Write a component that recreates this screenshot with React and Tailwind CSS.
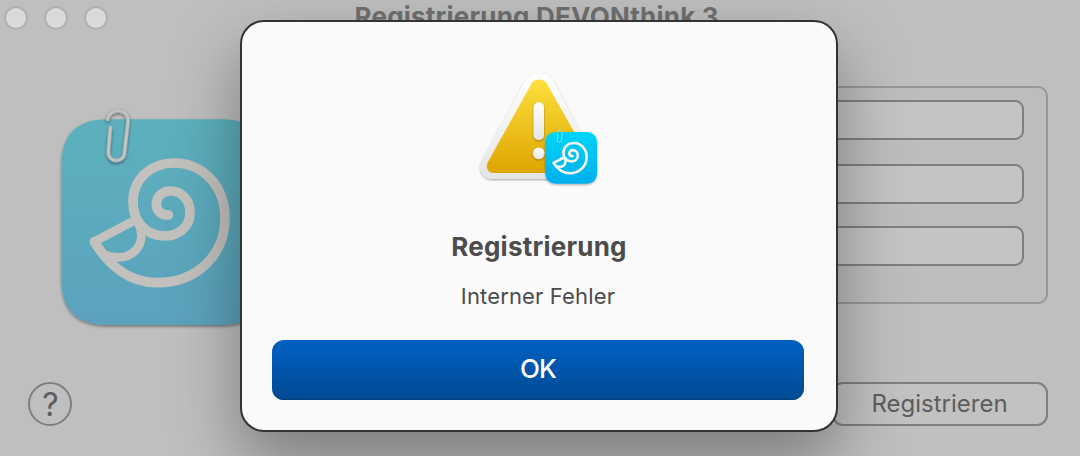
const SHELL =
  "M163 455 C205 525 268 578 352 578 C468 578 555 497 555 385 C555 285 486 219 402 219 C331 219 279 268 279 335 C279 394 318 438 375 438 C418 438 450 408 450 368 C450 329 425 303 390 303 C366 303 349 321 349 343 C349 362 363 375 385 375";
const FLAP = "M284 391 L163 455 M294 396 C301 410 304 422 304 437 C304 474 274 502 237 502 C222 502 208 500 194 494";
const CLIP =
  "M211 113 L205 185 C204 219 251 219 253 190 L264 96 C268 52 207 52 203 88";

function AppIcon() {
  return (
    <svg className="block h-[250px] w-[230px] shrink-0" viewBox="0 0 690 750">
      <defs>
        <linearGradient id="tile" x1="0" y1="0" x2="0" y2="1">
          <stop offset="0" stopColor="#5cb1bd" />
          <stop offset="1" stopColor="#5ca2bd" />
        </linearGradient>
        <filter id="soft" x="-20%" y="-20%" width="140%" height="140%">
          <feDropShadow dx="0" dy="5" stdDeviation="4" floodOpacity="0.4" />
        </filter>
      </defs>
      <path
        d="M204 88 H542 C637 88 682 133 682 228 V565 C682 660 637 705 542 705 H204 C109 705 64 660 64 565 V228 C64 133 109 88 204 88 Z"
        fill="url(#tile)"
        filter="url(#soft)"
      />
      <g fill="none" stroke="#c2c1be" strokeWidth="29" strokeLinecap="round" strokeLinejoin="round">
        <path d={SHELL} />
        <path d={FLAP} strokeWidth="26" />
      </g>
      <g fill="none" strokeLinecap="round">
        <path d={CLIP} stroke="#a4a8a8" strokeWidth="12" filter="url(#soft)" />
        <path d={CLIP} stroke="#c3c3c3" strokeWidth="8" />
      </g>
    </svg>
  );
}

function WarningIcon() {
  return (
    <svg className="block h-[140px] w-[160px]" viewBox="0 0 480 420">
      <defs>
        <linearGradient id="yellow" x1="0" y1="0" x2="0" y2="1">
          <stop offset="0" stopColor="#fce03d" />
          <stop offset="1" stopColor="#dfa400" />
        </linearGradient>
        <linearGradient id="rim" x1="0" y1="0" x2="0" y2="1">
          <stop offset="0" stopColor="#ffffff" />
          <stop offset="1" stopColor="#e5e5e5" />
        </linearGradient>
        <linearGradient id="cyan" x1="0" y1="0" x2="0" y2="1">
          <stop offset="0" stopColor="#00d5f7" />
          <stop offset="1" stopColor="#00aeee" />
        </linearGradient>
        <filter id="drop" x="-20%" y="-20%" width="140%" height="140%">
          <feDropShadow dx="0" dy="3" stdDeviation="3" floodOpacity="0.35" />
        </filter>
      </defs>
      <path
        d="M193 66 C213 32 262 32 282 66 L405 300 C419 328 402 357 371 357 H98 C67 357 52 327 67 300 Z"
        fill="url(#rim)"
        filter="url(#drop)"
      />
      <path
        d="M215 70 C224 55 251 55 260 70 L392 304 C402 323 394 339 374 339 H102 C82 339 75 322 85 304 Z"
        fill="url(#yellow)"
      />
      <g fill="url(#rim)" filter="url(#drop)">
        <rect x="221" y="127" width="31" height="113" rx="15" />
        <circle cx="236" cy="280" r="17.5" />
      </g>
      <path
        d="M291 216 H376 C400 216 411 228 411 251 V336 C411 360 400 371 376 371 H291 C267 371 256 360 256 336 V251 C256 228 267 216 291 216 Z"
        fill="url(#cyan)"
        filter="url(#drop)"
      />
      <g
        transform="translate(240 194) scale(0.252)"
        fill="none"
        stroke="#f8f7ef"
        strokeWidth="31"
        strokeLinecap="round"
        strokeLinejoin="round"
      >
        <path d={SHELL} />
        <path d={FLAP} />
        <path d={CLIP} stroke="#a9d5dc" strokeWidth="11" />
      </g>
    </svg>
  );
}

function Field({ className }) {
  return <div className={`h-10 rounded-[9px] border-2 border-[#7f7f7f] bg-[#c4c4c4] ${className}`} />;
}

function TrafficLight() {
  return <span className="size-6 rounded-full border-2 border-[#b0b0b0] bg-[#dadada]" />;
}

export default function App() {
  return (
    <div className="relative h-[456px] w-[1080px] overflow-hidden bg-[#bfbfbf] font-['Inter','Liberation_Sans',sans-serif]">
      <header className="flex h-9">
        <div className="flex gap-4 pt-[6px] pl-1">
          <TrafficLight />
          <TrafficLight />
          <TrafficLight />
        </div>
        <h1 className="ml-[246.5px] pt-px text-[26px] leading-[31px] font-bold tracking-[0.21px] whitespace-nowrap text-[#707070]">
          Registrierung DEVONthink 3
        </h1>
      </header>
      <main className="flex h-[346px] justify-between pr-8 pl-10">
        <div className="pt-[54px]">
          <AppIcon />
        </div>
        <section className="mt-[50px] h-[218px] w-[460px] rounded-[10px] border-2 border-[#979797] bg-[#bdbdbd] px-[22px] pt-3">
          <Field />
          <Field className="mt-6" />
          <Field className="mt-[22px]" />
        </section>
      </main>
      <footer className="flex justify-between pr-8 pl-7">
        <button className="flex size-11 items-center justify-center rounded-full border-2 border-[#7f7f7f]">
          <span className="pt-0.5 pl-px text-[32px] leading-none font-normal text-[#5d5d5d]">?</span>
        </button>
        <button className="h-11 w-[216px] rounded-[11px] border-2 border-[#7f7f7f] bg-[#c2c2c2] pr-px text-center text-[24px] leading-[40px] text-[#5d5d5d]">
          Registrieren
        </button>
      </footer>

      <div
        role="alertdialog"
        className="absolute top-5 left-60 flex h-[412px] w-[598px] flex-col items-center rounded-[24px] border-2 border-[#333333] bg-[#fafafa] px-[30px] shadow-[0_30px_68px_rgba(0,0,0,0.36)]"
      >
        <div className="mt-[38px] pl-0.5">
          <WarningIcon />
        </div>
        <h2 className="mt-[31px] text-[26px] leading-8 font-bold tracking-[0.23px] text-[#4c4c4c]">Registrierung</h2>
        <p className="mt-[19px] pr-0.5 text-[22px] leading-7 tracking-[0.15px] text-[#4c4c4c]">Interner Fehler</p>
        <button className="mt-[30px] h-[60px] w-[532px] self-start rounded-[12px] bg-linear-to-b from-[#0061c2] to-[#004a94] pb-0.5 text-[26px] leading-[56px] font-medium tracking-[-0.9px] text-white shadow-[inset_0_-1px_0_#00407f]">
          OK
        </button>
      </div>
    </div>
  );
}
